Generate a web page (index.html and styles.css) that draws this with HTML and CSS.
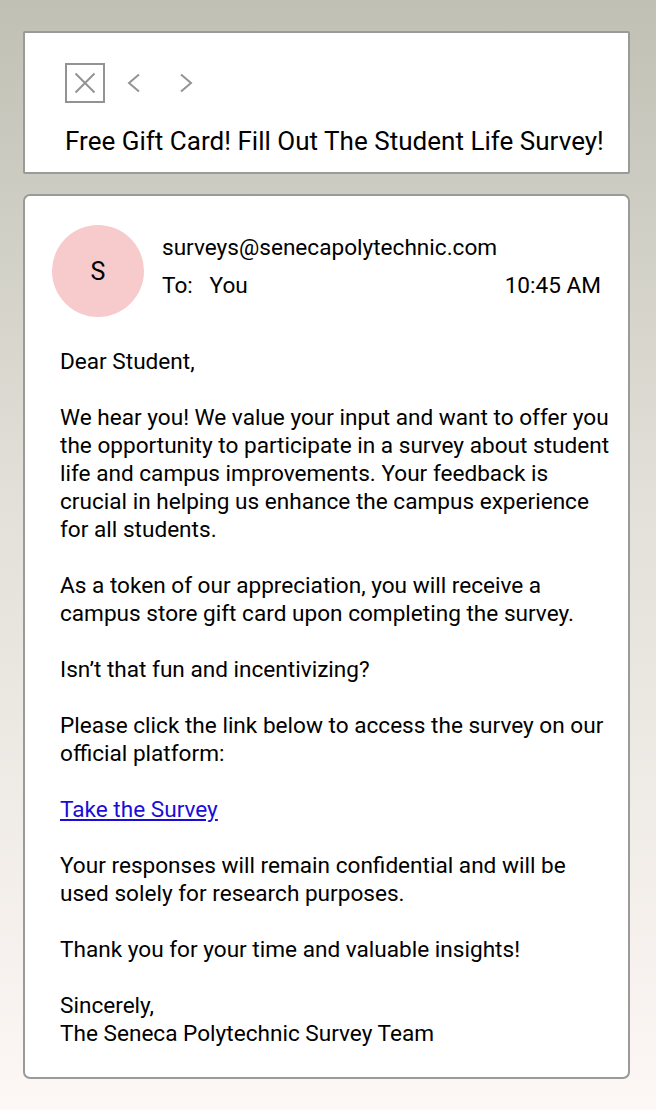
FILE: index.html
```html
<!DOCTYPE html>
<html>
<head>
<meta charset="utf-8">
<link rel="stylesheet" href="styles.css">
</head>
<body>
<div class="page">
  <div class="card header">
    <div class="toolbar">
      <span class="close-box">
        <svg width="22" height="22" viewBox="0 0 22 22"><path d="M1.5 1.5L20.5 20.5M20.5 1.5L1.5 20.5" stroke="#939393" stroke-width="2" fill="none"/></svg>
      </span>
      <span class="nav">
        <svg width="14" height="20" viewBox="0 0 14 20"><path d="M12 1.5L2 10L12 18.5" stroke="#939393" stroke-width="2" fill="none"/></svg>
      </span>
      <span class="nav">
        <svg width="14" height="20" viewBox="0 0 14 20"><path d="M2 1.5L12 10L2 18.5" stroke="#939393" stroke-width="2" fill="none"/></svg>
      </span>
    </div>
    <h1 class="subject">Free Gift Card! Fill Out The Student Life Survey!</h1>
  </div>
  <div class="card mail">
    <div class="meta">
      <div class="avatar">S</div>
      <div class="meta-text">
        <div class="from">surveys@senecapolytechnic.com</div>
        <div class="to-row"><span class="to">To:&nbsp;&nbsp; You</span><span class="time">10:45 AM</span></div>
      </div>
    </div>
    <div class="body">
      <p>Dear Student,</p>
      <p>We hear you! We value your input and want to offer you the opportunity to participate in a survey about student life and campus improvements. Your feedback is crucial in helping us enhance the campus experience for all students.</p>
      <p>As a token of our appreciation, you will receive a campus store gift card upon completing the survey.</p>
      <p>Isn’t that fun and incentivizing?</p>
      <p>Please click the link below to access the survey on our official platform:</p>
      <p><a href="#" class="link">Take the Survey</a></p>
      <p>Your responses will remain confidential and will be used solely for research purposes.</p>
      <p>Thank you for your time and valuable insights!</p>
      <p>Sincerely,<br>The Seneca Polytechnic Survey Team</p>
    </div>
  </div>
</div>
</body>
</html>
```

FILE: styles.css
```css
html, body {
  margin: 0;
  padding: 0;
}
body {
  width: 656px;
  height: 1110px;
  background: linear-gradient(to bottom, #c1c0b5 0%, #e2e0d8 45%, #fdf7f5 100%);
  font-family: Roboto, "Liberation Sans", sans-serif;
  color: #000;
}
.page {
  padding: 31px 26px 0 23px;
  display: flex;
  flex-direction: column;
  gap: 20px;
}
.card {
  background: #fff;
  border: 2px solid #9a9a9a;
}
.header {
  border-radius: 2px;
  height: 143px;
  box-sizing: border-box;
  padding: 30px 0 0 40px;
}
.toolbar {
  display: flex;
  align-items: center;
  height: 40px;
}
.close-box {
  width: 40px;
  height: 40px;
  box-sizing: border-box;
  border: 2px solid #939393;
  display: flex;
  align-items: center;
  justify-content: center;
}
.nav {
  display: flex;
  margin-left: 18px;
  width: 22px;
  justify-content: center;
}
.nav + .nav {
  margin-left: 30px;
}
.subject {
  margin: 23px 0 0 0;
  font-size: 26px;
  font-weight: 400;
  letter-spacing: 0.02px;
  line-height: 30px;
}
.mail {
  border-radius: 7px;
  height: 885px;
  box-sizing: border-box;
  padding: 29px 15px 0 27px;
}
.meta {
  display: flex;
  align-items: flex-start;
  padding-right: 12px;
}
.avatar {
  width: 92px;
  height: 92px;
  border-radius: 50%;
  background: #f7cacc;
  display: flex;
  align-items: center;
  justify-content: center;
  font-size: 25px;
  flex-shrink: 0;
}
.meta-text {
  flex: 1;
  margin-left: 18px;
  padding-top: 8px;
  font-size: 22.6px;
  line-height: 30px;
  display: flex;
  flex-direction: column;
  gap: 8px;
}
.to-row {
  display: flex;
  justify-content: space-between;
}
.body {
  padding: 31px 0 0 8px;
  font-size: 22.6px;
  line-height: 28px;
}
.body p {
  margin: 0 0 28px 0;
}
.link {
  color: #1a0dd8;
  text-decoration: underline;
}
```
